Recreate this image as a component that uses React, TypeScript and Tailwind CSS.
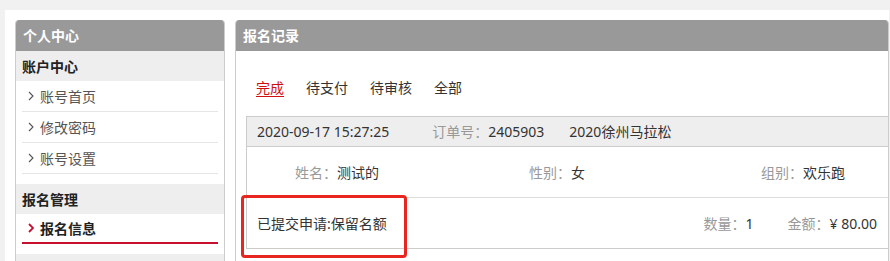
import { useState } from "react"

const font = { fontFamily: '"Noto Sans", "Noto Sans CJK SC", sans-serif' }

function Chevron({ active }: { active?: boolean }) {
  return (
    <svg width="6" height="10" viewBox="0 0 6 10" className="shrink-0">
      <polyline
        points="1,1 5,5 1,9"
        fill="none"
        stroke={active ? "#c8102e" : "#555"}
        strokeWidth={active ? 1.8 : 1.1}
      />
    </svg>
  )
}

const accountLinks = ["账号首页", "修改密码", "账号设置"]
const tabs = ["完成", "待支付", "待审核", "全部"]

export default function App() {
  const [activeTab, setActiveTab] = useState("完成")

  return (
    <div className="relative h-[261px] w-[890px] overflow-hidden bg-[#f1f1f1] text-[14px] text-[#333]" style={font}>
      <div className="ml-[5px] mt-[10px] flex h-[260px] w-[884px] gap-[10px] bg-white pl-[10px] pt-[10px]">
        {/* sidebar */}
        <div className="w-[210px] shrink-0 overflow-hidden rounded-t-[4px] border border-t-0 border-[#ccc]">
          <div className="flex h-[31px] items-center bg-[#999] px-[7px] font-bold text-white">个人中心</div>
          <div className="flex h-[30px] items-center bg-[#eee] px-[6px] font-bold text-[#222]">账户中心</div>
          <ul className="px-[6px]">
            {accountLinks.map((link) => (
              <li key={link} className="flex h-[31px] items-center gap-[6px] border-b border-[#e6e6e6] pl-[6px] text-[#555]">
                <Chevron />
                {link}
              </li>
            ))}
          </ul>
          <div className="mt-[10px] flex h-[30px] items-center bg-[#eee] px-[6px] font-bold text-[#222]">报名管理</div>
          <div className="px-[6px]">
            <div className="flex h-[30px] items-center gap-[6px] border-b-[2px] border-[#c8102e] pl-[6px] font-bold text-[#222]">
              <Chevron active />
              报名信息
            </div>
          </div>
          <div className="mt-[10px] h-[30px] bg-[#eee]" />
        </div>

        {/* main */}
        <div className="w-[654px] shrink-0 overflow-hidden rounded-t-[4px] border border-t-0 border-[#ccc]">
          <div className="flex h-[31px] items-center bg-[#999] px-[7px] font-bold text-white">报名记录</div>
          <div className="flex gap-[22px] pl-[20px] pt-[27px] leading-[20px]">
            {tabs.map((tab) => (
              <button
                key={tab}
                onClick={() => setActiveTab(tab)}
                className={activeTab === tab ? "text-[#d01010] underline underline-offset-[3px]" : "text-[#333]"}
              >
                {tab}
              </button>
            ))}
          </div>

          <div className="ml-[10px] mt-[18px] w-[642px] border border-r-0 border-[#ccc]">
            <div className="flex h-[30px] items-center border-b border-[#ccc] bg-[#eee] pl-[10px]">
              <span>2020-09-17 15:27:25</span>
              <span className="ml-[43px] text-[#999]">订单号：</span>
              <span>2405903</span>
              <span className="ml-[25px]">2020徐州马拉松</span>
            </div>
            <div className="grid h-[51px] grid-cols-[233px_233px_176px] items-center border-b border-[#ddd]">
              <div className="flex">
                <span className="w-[90px] text-right text-[#999]">姓名：</span>
                <span>测试的</span>
              </div>
              <div className="flex">
                <span className="w-[91px] text-right text-[#999]">性别：</span>
                <span>女</span>
              </div>
              <div className="flex">
                <span className="w-[90px] text-right text-[#999]">组别：</span>
                <span>欢乐跑</span>
              </div>
            </div>
            <div className="flex h-[50px] items-center pl-[10px] pr-[11px]">
              <span>已提交申请:保留名额</span>
              <span className="ml-auto text-[#999]">数量：</span>
              <span>1</span>
              <span className="ml-[34px] text-[#999]">金额：</span>
              <span>¥ 80.00</span>
            </div>
          </div>
        </div>
      </div>

      {/* red annotation box */}
      <div className="pointer-events-none absolute left-[241px] top-[195px] h-[63px] w-[166px] rounded-[4px] border-[3px] border-[#e8261f]" />
    </div>
  )
}
